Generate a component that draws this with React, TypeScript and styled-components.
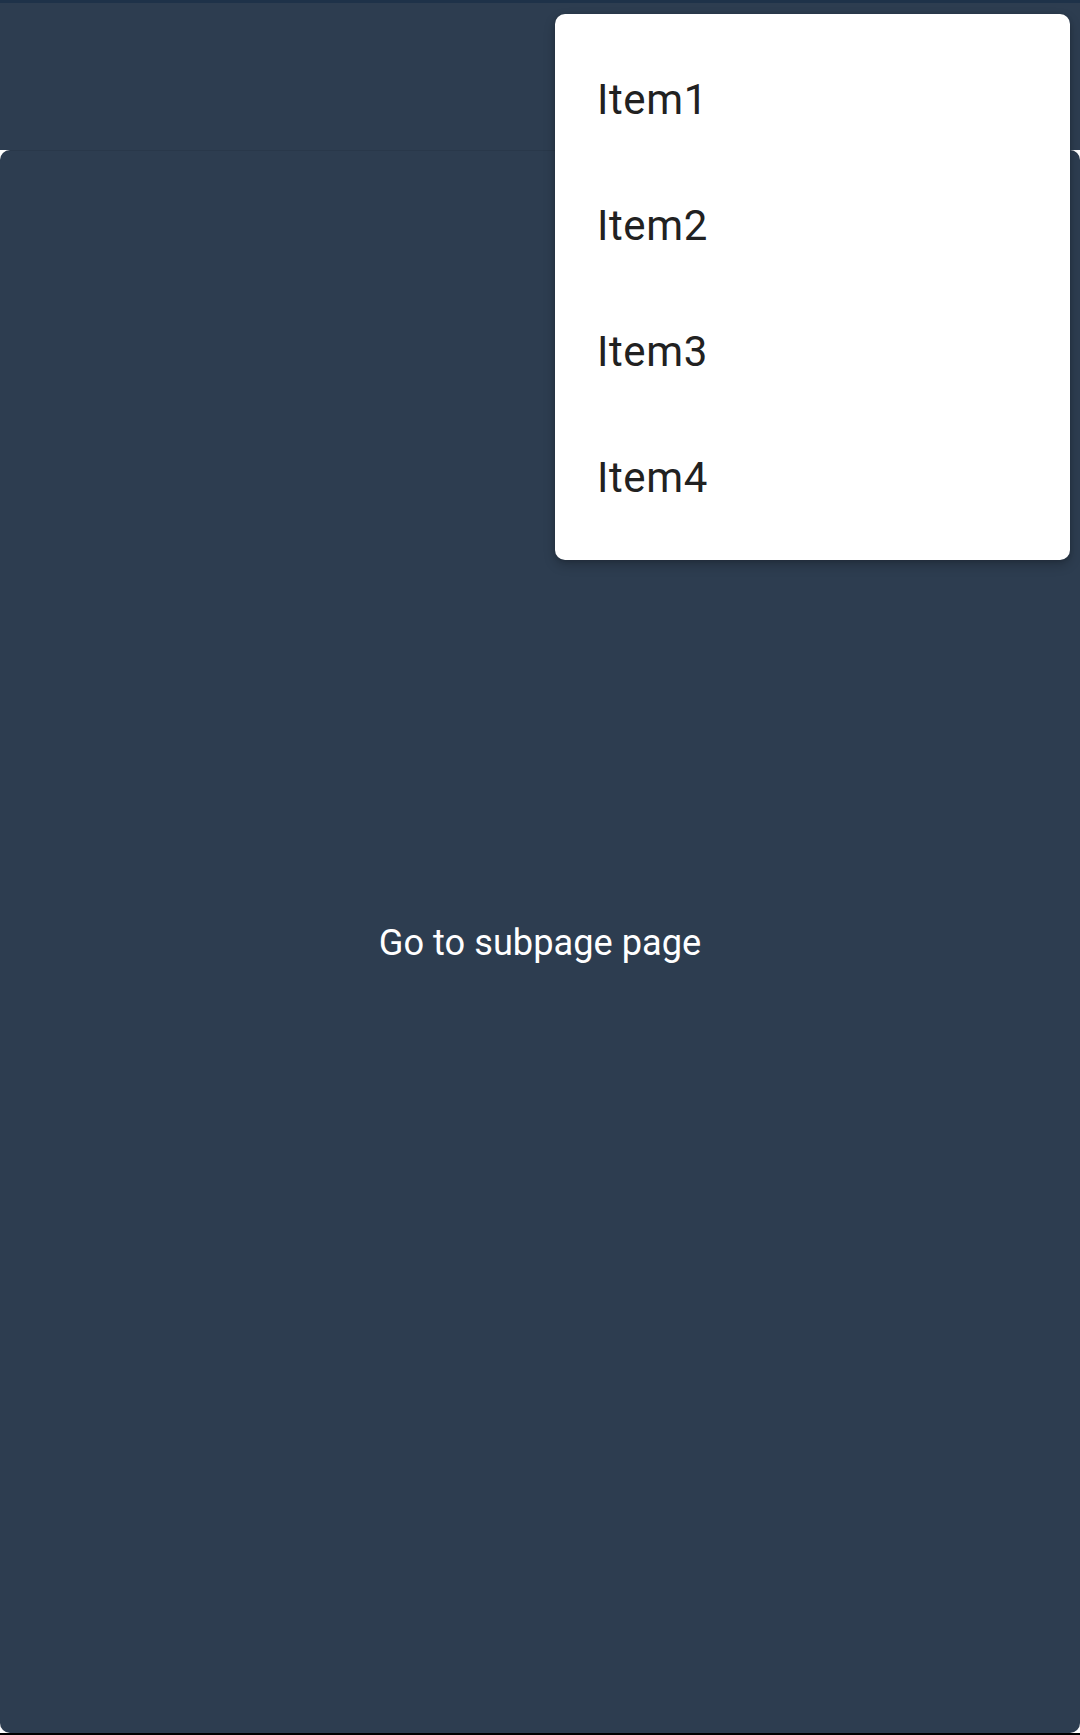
import React from "react";
import styled, { createGlobalStyle } from "styled-components";

const Global = createGlobalStyle`
  html, body {
    margin: 0;
    padding: 0;
    background: #ffffff;
  }
  * { box-sizing: border-box; }
`;

const Screen = styled.div`
  position: relative;
  width: 1080px;
  height: 1735px;
  display: flex;
  flex-direction: column;
  background: #ffffff;
  font-family: Roboto, "Noto Sans", sans-serif;
  overflow: hidden;
`;

const StatusStripe = styled.div`
  height: 3px;
  flex: none;
  background: #1e3249;
`;

const TopBar = styled.header`
  height: 147px;
  flex: none;
  background: #2d3d50;
`;

const Content = styled.main`
  flex: 1;
  display: flex;
  align-items: center;
  justify-content: center;
  padding-top: 4px;
  background: #2d3d50;
  border-radius: 10px;
  box-shadow: inset 0 1px 0 rgba(0, 0, 0, 0.07);
`;

const LinkText = styled.span`
  color: #ffffff;
  font-size: 36.2px;
  line-height: 1.172;
  font-family: Roboto, "Noto Sans", sans-serif;
`;

const BottomEdge = styled.div`
  height: 2px;
  flex: none;
  background: #000000;
`;

const Menu = styled.ul`
  position: absolute;
  top: 14px;
  left: 555px;
  width: 515px;
  margin: 0;
  padding: 21px 0 21px;
  list-style: none;
  background: #ffffff;
  border-radius: 10px;
  box-shadow: 0 5px 12px rgba(0, 0, 0, 0.22), 0 1px 4px rgba(0, 0, 0, 0.14);
`;

const MenuItem = styled.li`
  height: 126px;
  display: flex;
  align-items: center;
  padding: 4px 42px 0;
  color: #212121;
  font-size: 42px;
  letter-spacing: 0.6px;
  line-height: 1.172;
  font-family: Roboto, "Noto Sans", sans-serif;
`;

const items = ["Item1", "Item2", "Item3", "Item4"];

export default function App() {
  return (
    <>
      <Global />
      <Screen>
        <StatusStripe />
        <TopBar />
        <Content>
          <LinkText>Go to subpage page</LinkText>
        </Content>
        <BottomEdge />
        <Menu>
          {items.map((it) => (
            <MenuItem key={it}>{it}</MenuItem>
          ))}
        </Menu>
      </Screen>
    </>
  );
}
